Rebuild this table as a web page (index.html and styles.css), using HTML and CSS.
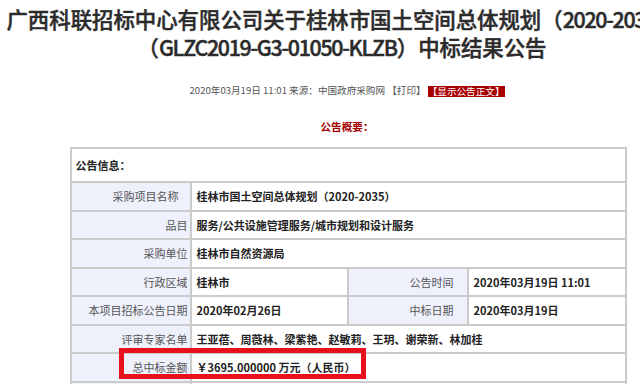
FILE: index.html
```html
<!DOCTYPE html>
<html lang="zh-CN">
<head>
<meta charset="utf-8">
<title>中标结果公告</title>
<link rel="stylesheet" href="styles.css">
</head>
<body>
<div class="page">
  <h1 class="title">广西科联招标中心有限公司关于桂林市国土空间总体规划（<span class="lat">2020-2035</span>）<br>（<span class="lat">GLZC2019-G3-01050-KLZB</span>）中标结果公告</h1>
  <p class="meta">2020年03月19日 11:01 来源：中国政府采购网 【打印】 <span class="badge">【显示公告正文】</span></p>
  <p class="summary">公告概要：</p>
  <table class="info">
    <colgroup>
      <col class="c1"><col class="c2"><col class="c3"><col class="c4">
    </colgroup>
    <tr class="head"><td colspan="4">公告信息：</td></tr>
    <tr><td class="lbl lbl-wide">采购项目名称</td><td class="val" colspan="3">桂林市国土空间总体规划（2020-2035）</td></tr>
    <tr><td class="lbl">品目</td><td class="val" colspan="3">服务/公共设施管理服务/城市规划和设计服务</td></tr>
    <tr><td class="lbl">采购单位</td><td class="val" colspan="3">桂林市自然资源局</td></tr>
    <tr><td class="lbl">行政区域</td><td class="val">桂林市</td><td class="lbl lbl-2">公告时间</td><td class="val">2020年03月19日 11:01</td></tr>
    <tr><td class="lbl">本项目招标公告日期</td><td class="val">2020年02月26日</td><td class="lbl lbl-2">中标日期</td><td class="val">2020年03月19日</td></tr>
    <tr><td class="lbl">评审专家名单</td><td class="val" colspan="3">王亚蓓、周薇林、梁紫艳、赵敏莉、王玥、谢荣新、林加桂</td></tr>
    <tr><td class="lbl">总中标金额</td><td class="val" colspan="3">￥3695.000000 万元（人民币）</td></tr>
    <tr><td class="lbl">&nbsp;</td><td class="val" colspan="3">&nbsp;</td></tr>
  </table>
  <div class="highlight"></div>
</div>
</body>
</html>
```

FILE: styles.css
```css
html, body {
  margin: 0;
  padding: 0;
  overflow: hidden;
  background: #ffffff;
}

body {
  font-family: "Noto Sans CJK SC", "Noto Sans", sans-serif;
  color: #333333;
}

.page {
  position: relative;
  width: 694px;
}

.title {
  margin: 0 0 0 6px;
  width: 672px;
  padding-top: 5px;
  font-size: 21.4px;
  line-height: 28px;
  font-weight: 500;
  color: #2b2b2b;
  text-align: center;
  white-space: nowrap;
  -webkit-text-stroke: 0.45px #2b2b2b;
}

.title .lat {
  letter-spacing: -1.3px;
}

.meta {
  margin: 19px 0 0 0;
  height: 20px;
  line-height: 20px;
  font-size: 9.6px;
  color: #555555;
  text-align: center;
}

.badge {
  display: inline-block;
  height: 11px;
  line-height: 11px;
  vertical-align: middle;
  background: #a60000;
  color: #ffffff;
}

.summary {
  margin: 19px 0 0 0;
  height: 16px;
  line-height: 16px;
  font-size: 10.6px;
  font-weight: 700;
  color: #a50000;
  text-align: center;
}

.info {
  margin: 12px 0 0 69.5px;
  width: 555px;
  table-layout: fixed;
  border-collapse: collapse;
  font-size: 11px;
}

.c1 { width: 120px; }
.c2 { width: 157px; }
.c3 { width: 120px; }
.c4 { width: 158px; }

.info td {
  border: 2px solid #cbcbcb;
  height: 26.5px;
  padding: 0;
  white-space: nowrap;
  overflow: hidden;
}

.info .head td {
  height: 32px;
  padding-left: 4px;
  font-weight: 700;
  color: #222222;
}

.lbl {
  background: #eef0fb;
  color: #555555;
  text-align: right;
  padding-right: 2px !important;
}

.lbl-wide {
  padding-right: 11px !important;
}

.lbl-2 {
  padding-right: 13px !important;
}

.val {
  padding-left: 5px !important;
  font-weight: 700;
  color: #222222;
}

.highlight {
  position: absolute;
  left: 119px;
  top: 348px;
  width: 247px;
  height: 31px;
  box-sizing: border-box;
  border: 5px solid #e8101a;
}
```
